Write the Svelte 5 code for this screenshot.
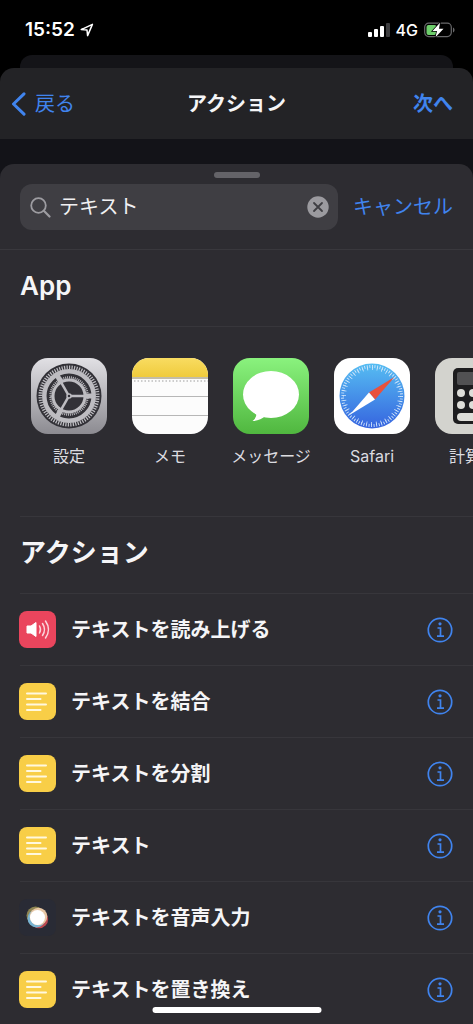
<script>
	let query = $state('テキスト')

	const apps = [
		{ id: 'settings', name: '設定' },
		{ id: 'notes', name: 'メモ' },
		{ id: 'messages', name: 'メッセージ' },
		{ id: 'safari', name: 'Safari' },
		{ id: 'calculator', name: '計算機' }
	]

	const actions = [
		{ icon: 'speak', name: 'テキストを読み上げる' },
		{ icon: 'text', name: 'テキストを結合' },
		{ icon: 'text', name: 'テキストを分割' },
		{ icon: 'text', name: 'テキスト' },
		{ icon: 'dictate', name: 'テキストを音声入力' },
		{ icon: 'text', name: 'テキストを置き換え' }
	]
</script>

<div class="screen">
	<div class="status">
		<div class="clock">
			<span>15:52</span>
			<svg width="14" height="14" viewBox="0 0 14 14" aria-hidden="true">
				<path d="M1.2 6.6 12.4 1.4 7.6 12.6 7 7Z" fill="none" stroke="#fff" stroke-width="1.5" stroke-linejoin="round" />
			</svg>
		</div>
		<div class="signals">
			<svg width="22" height="14" viewBox="0 0 22 14" aria-hidden="true">
				<rect x="0" y="9" width="4" height="5" rx="1" fill="#fff" />
				<rect x="6" y="6" width="4" height="8" rx="1" fill="#fff" />
				<rect x="12" y="3" width="4" height="11" rx="1" fill="#fff" />
				<rect x="18" y="0" width="4" height="14" rx="1" fill="#3c3c3e" />
			</svg>
			<span>4G</span>
			<svg width="31" height="16" viewBox="0 0 31 16" aria-hidden="true">
				<rect x="0.7" y="1.2" width="26.6" height="13.4" rx="4" fill="none" stroke="#68686a" stroke-width="1.2" />
				<path d="M29 5.5c2 .8 2 4.2 0 5Z" fill="#68686a" />
				<rect x="2.5" y="3" width="10" height="10" rx="2" fill="#6dce6b" />
				<path d="M16 .8 8.5 9H13L11.5 15.2 19.5 6.7H15Z" fill="#fff" stroke="#000" stroke-width="1.4" paint-order="stroke" />
			</svg>
		</div>
	</div>

	<div class="behind"></div>

	<header class="nav">
		<button class="back">
			<svg width="15" height="24" viewBox="0 0 15 24" aria-hidden="true">
				<path d="M13 1.8 2.5 12 13 22.2" fill="none" stroke="currentColor" stroke-width="3" stroke-linecap="round" stroke-linejoin="round" />
			</svg>
			戻る
		</button>
		<h1>アクション</h1>
		<button class="next">次へ</button>
	</header>

	<main class="sheet">
		<div class="grip"><div class="handle"></div></div>
		<div class="search">
			<div class="field">
				<svg width="21" height="21" viewBox="0 0 21 21" aria-hidden="true">
					<circle cx="8.5" cy="8.5" r="7.3" fill="none" stroke="#9d9ca1" stroke-width="1.8" />
					<path d="M13.8 13.8 19.5 19.5" stroke="#9d9ca1" stroke-width="2.2" stroke-linecap="round" />
				</svg>
				<input type="text" aria-label="検索" bind:value={query} />
				<button class="clear" aria-label="消去" onclick={() => (query = '')}>
					<svg width="22" height="22" viewBox="0 0 22 22">
						<circle cx="11" cy="11" r="10.7" fill="#9b9a9f" />
						<path d="M7 7 15 15M15 7 7 15" stroke="#3f3e43" stroke-width="1.8" stroke-linecap="round" />
					</svg>
				</button>
			</div>
			<button class="cancel">キャンセル</button>
		</div>

		<section class="apps">
			<h2>App</h2>
			<div class="shelf">
				{#each apps as app}
					<button class="app">
						<svg class="tile" viewBox="0 0 76 76" aria-hidden="true">
							{#if app.id === 'settings'}
								<defs>
									<linearGradient id="steel" x2="0" y2="1">
										<stop offset="0" stop-color="#e1e0e4" />
										<stop offset="1" stop-color="#8c8b91" />
									</linearGradient>
								</defs>
								<rect width="76" height="76" fill="url(#steel)" />
								<circle cx="38" cy="38" r="32.5" fill="#323137" />
								<g fill="none" stroke="#bdbcc1">
									<circle cx="38" cy="38" r="28.5" stroke-width="4" pathLength="144" stroke-dasharray="1 1" />
									<circle cx="38" cy="38" r="24.7" stroke-width="4.5" />
									<circle cx="38" cy="38" r="18.5" stroke-width="2.5" pathLength="120" stroke-dasharray="1 1" />
									<circle cx="38" cy="38" r="16" stroke-width="3" />
									{#each [0, 120, 240] as angle}
										<path d="M40 38H62" stroke-width="2.5" transform="rotate({angle} 38 38)" />
										<path d="M54 38H63" stroke-width="5" transform="rotate({angle} 38 38)" />
									{/each}
									<circle cx="38" cy="38" r="2" fill="#323137" stroke-width="1.5" />
								</g>
							{:else if app.id === 'notes'}
								<defs>
									<linearGradient id="pad" x2="0" y2="1">
										<stop offset="0" stop-color="#f9dc61" />
										<stop offset="1" stop-color="#efcb3c" />
									</linearGradient>
								</defs>
								<rect width="76" height="76" fill="#fcfcfc" />
								<rect width="76" height="19" fill="url(#pad)" />
								<path d="M0 20H76" stroke="#c3bda8" stroke-width="2" />
								<path d="M2 23H76" stroke="#bdbdbd" stroke-width="1.5" stroke-dasharray="1.5 2" />
								<path d="M0 38.5H76M0 57.5H76" stroke="#b7b7b7" />
							{:else if app.id === 'messages'}
								<defs>
									<linearGradient id="green" x2="0" y2="1">
										<stop offset="0" stop-color="#8af27e" />
										<stop offset="1" stop-color="#50b73f" />
									</linearGradient>
								</defs>
								<rect width="76" height="76" fill="url(#green)" />
								<ellipse cx="38" cy="36.5" rx="28" ry="23.5" fill="#fff" />
								<path d="M23 54C24 58 22.5 60.500 19.500 63 25 62.800 29 61 32.500 58Z" fill="#fff" />
							{:else if app.id === 'safari'}
								<defs>
									<linearGradient id="sky" x2="0" y2="1">
										<stop offset="0" stop-color="#56bdf2" />
										<stop offset="1" stop-color="#3664df" />
									</linearGradient>
								</defs>
								<rect width="76" height="76" fill="#fff" />
								<circle cx="38" cy="38" r="32.5" fill="url(#sky)" />
								<circle cx="38" cy="38" r="29.5" fill="none" stroke="#d5e8fb" stroke-width="3" pathLength="216" stroke-dasharray="1 2" />
								<circle cx="38" cy="38" r="27.5" fill="none" stroke="#d5e8fb" stroke-width="3" pathLength="216" stroke-dasharray="1 5" />
								<path d="M60.500 19 35 34.500 41 41.500Z" fill="#e9513d" />
								<path d="M15.500 57 35 34.500 41 41.500Z" fill="#fff" />
							{:else}
								<rect width="76" height="76" fill="#d3d3ce" />
								<rect x="18" y="10" width="40" height="56" rx="5" fill="#1d1d1f" />
								<rect x="22" y="14" width="32" height="13" rx="2" fill="#515153" />
								<g fill="#deded9">
									<circle cx="26" cy="35" r="4" />
									<circle cx="38" cy="35" r="4" />
									<circle cx="50" cy="35" r="4" />
									<circle cx="26" cy="47" r="4" />
									<circle cx="38" cy="47" r="4" />
									<circle cx="50" cy="47" r="4" />
									<rect x="22" y="55" width="20" height="8" rx="4" />
								</g>
							{/if}
						</svg>
						<span>{app.name}</span>
					</button>
				{/each}
			</div>
		</section>

		<section class="actions">
			<h2>アクション</h2>
			<ul>
				{#each actions as action}
					<li>
						<svg class="badge {action.icon}" viewBox="0 0 37 37" aria-hidden="true">
							{#if action.icon === 'speak'}
								<path d="M8 15H12L17 11.500V25.500L12 22H8Z" fill="#fff" stroke="#fff" stroke-linejoin="round" />
								<path d="M20.500 15Q22.500 18.500 20.500 22M23.500 12.500Q27.500 18.500 23.500 24.500M26.500 10Q32.500 18.500 26.500 27" fill="none" stroke="#fbd5da" stroke-width="1.5" stroke-linecap="round" />
							{:else if action.icon === 'text'}
								<path d="M8 10.500H27M8 16H21.500M8 21.500H27M8 27H21.500" fill="none" stroke="#fff8df" stroke-width="2" stroke-linecap="round" />
							{:else}
								<circle cx="16.500" cy="16.500" r="9" fill="#8d8452" />
								<circle cx="20" cy="20" r="9.2" fill="#bd4a50" />
								<circle cx="17.500" cy="19.500" r="9" fill="#79b4d2" />
								<circle cx="19.500" cy="17.500" r="8.8" fill="#e8c7a4" />
								<circle cx="18.500" cy="18.500" r="7.5" fill="#fff" />
							{/if}
						</svg>
						<span>{action.name}</span>
						<button class="info" aria-label="{action.name}の情報">
							<svg width="26" height="26" viewBox="0 0 26 26">
								<circle cx="13" cy="13" r="11.7" fill="none" stroke="currentColor" stroke-width="1.7" />
								<circle cx="13" cy="6.8" r="1.6" fill="currentColor" />
								<path d="M10.500 11H13.500V19M10 19.200H17" fill="none" stroke="currentColor" stroke-width="1.7" />
							</svg>
						</button>
					</li>
				{/each}
			</ul>
		</section>
	</main>

	<div class="home"></div>
</div>

<style>
	:global(body) {
		margin: 0;
		background: #000;
	}

	.screen {
		height: 100vh;
		overflow: hidden;
		display: flex;
		flex-direction: column;
		background: #000;
		color: #f5f5f7;
		font-family: Inter, "Noto Sans CJK JP", sans-serif;
		font-size: 20px;
		line-height: 28px;
	}

	button {
		border: 0;
		padding: 0;
		background: none;
		color: #4084ee;
		font: inherit;
		cursor: pointer;
	}

	svg {
		display: block;
		flex: none;
	}

	h1,
	h2,
	ul {
		margin: 0;
		padding: 0;
	}

	.status {
		flex: none;
		height: 55px;
		box-sizing: border-box;
		padding: 4px 18px 0 25px;
		display: flex;
		align-items: center;
		justify-content: space-between;
		color: #fff;
	}

	.clock {
		display: flex;
		align-items: center;
		gap: 5px;
		font-size: 19px;
		font-weight: 600;
	}

	.signals {
		display: flex;
		align-items: center;
		gap: 6px;
		font-size: 16px;
		font-weight: 500;
	}

	.behind {
		flex: none;
		height: 27px;
		margin: 0 20px -14px;
		border-radius: 12px 12px 0 0;
		background: #141418;
	}

	.nav {
		flex: none;
		height: 71px;
		box-sizing: border-box;
		padding: 0 20px 0 11px;
		display: grid;
		grid-template-columns: 1fr auto 1fr;
		align-items: center;
		border-radius: 14px 14px 0 0;
		background: #232326;
	}

	.back {
		display: flex;
		align-items: center;
		gap: 9px;
		justify-self: start;
	}

	h1 {
		padding-left: 9px;
		font-size: 20px;
		font-weight: 700;
	}

	.next {
		justify-self: end;
		font-weight: 700;
	}

	.sheet {
		flex: 1;
		min-height: 0;
		display: flex;
		flex-direction: column;
		padding-top: 25px;
		background: #131318;
	}

	.grip {
		flex: none;
		height: 20px;
		box-sizing: border-box;
		padding-top: 8px;
		border-radius: 14px 14px 0 0;
		background: #2d2c31;
	}

	.handle {
		width: 46px;
		height: 6px;
		margin: 0 auto;
		border-radius: 3px;
		background: #646368;
	}

	.search {
		flex: none;
		padding: 0 20px 19px;
		display: flex;
		align-items: center;
		gap: 15px;
		border-bottom: 1px solid #39383d;
		background: #2d2c31;
	}

	.field {
		flex: 1;
		min-width: 0;
		height: 46px;
		box-sizing: border-box;
		padding: 0 9px 0 10px;
		display: flex;
		align-items: center;
		gap: 8px;
		border-radius: 12px;
		background: #3f3e43;
	}

	.field input {
		flex: 1;
		min-width: 0;
		border: 0;
		padding: 0;
		outline: 0;
		background: none;
		color: #f0f0f2;
		font: inherit;
	}

	h2 {
		font-size: 26px;
		font-weight: 600;
		line-height: 36px;
	}

	.apps {
		flex: none;
		background: #2d2c31;
	}

	.apps h2 {
		margin-left: 20px;
		padding: 18px 0 22px;
		border-bottom: 1px solid #37363b;
	}

	.shelf {
		height: 189px;
		box-sizing: border-box;
		padding: 31px 31px 0;
		display: flex;
		align-items: flex-start;
		gap: 25px;
		overflow: hidden;
	}

	.app {
		flex: none;
		width: 76px;
		display: flex;
		flex-direction: column;
		align-items: center;
		gap: 10px;
		color: #dcdce0;
		font-size: 16px;
		line-height: 24px;
		white-space: nowrap;
	}

	.tile {
		width: 76px;
		height: 76px;
		border-radius: 17px;
	}

	.actions {
		flex: 1;
		min-height: 0;
		padding-left: 20px;
		background: #2d2c31;
	}

	.actions h2 {
		padding: 18px 0 22px;
		border-top: 1px solid #37363b;
	}

	ul {
		list-style: none;
	}

	li {
		height: 72px;
		box-sizing: border-box;
		padding-right: 20px;
		display: flex;
		align-items: center;
		gap: 15px;
		border-top: 1px solid #37363b;
		font-weight: 600;
	}

	li span {
		flex: 1;
	}

	.badge {
		width: 37px;
		height: 37px;
		margin-left: -1px;
		border-radius: 8px;
	}

	.badge.text {
		background: #f8ce47;
	}

	.badge.speak {
		background: #ea455d;
	}

	.badge.dictate {
		background: #292b35;
	}

	.home {
		position: fixed;
		bottom: 11px;
		left: 50%;
		width: 169px;
		height: 6px;
		border-radius: 3px;
		background: #fff;
		transform: translateX(-50%);
	}
</style>
